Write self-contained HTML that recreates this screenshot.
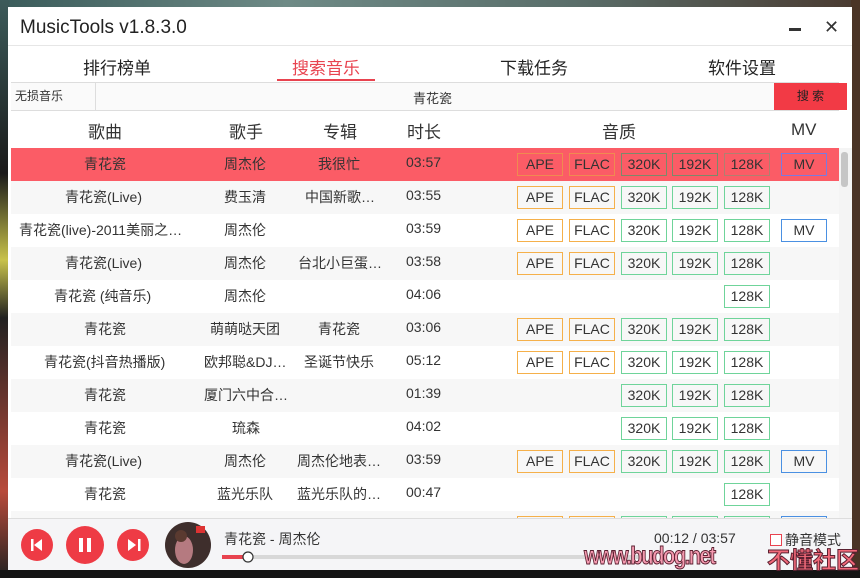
<!DOCTYPE html>
<html><head><meta charset="utf-8"><style>
*{margin:0;padding:0;box-sizing:border-box}
body{width:860px;height:578px;overflow:hidden;background:#1d2a2a;font-family:"Liberation Sans","Noto Sans CJK SC",sans-serif;position:relative;color:#333}
.bg1{position:absolute;left:0;top:0;width:860px;height:8px;background:linear-gradient(90deg,#3a5b5a,#6e8a86,#5a6e6a,#4a3a30)}
.bgL{position:absolute;left:0;top:0;width:9px;height:578px;background:linear-gradient(#3d5b5a,#1a1a1a 30%,#c8c24a 45%,#222 55%,#b84a3a 85%,#222)}
.bgR{position:absolute;right:0;top:0;width:9px;height:578px;background:#4a3426}
.bgB{position:absolute;left:0;top:570px;width:860px;height:8px;background:#141414}
.win{position:absolute;left:8px;top:7px;width:844px;height:563px;background:#fff;overflow:hidden}
.abs{position:absolute}
.title{left:12px;top:10px;font-size:19px;color:#222}
.tab{top:47px;font-size:17px;color:#222}
.hd{top:111px;font-size:17px}
.row{position:absolute;left:3px;width:828px;height:33px;font-size:14px;color:#333}
.row span{position:absolute;top:6px;white-space:nowrap}
.b{position:absolute;top:5px;height:23px;width:46px;border:1px solid;font-size:14px;text-align:center;line-height:21px}
.o{border-color:#f5b04a}.g{border-color:#6fd49a}.m{border-color:#4a90e2}
</style></head><body>
<div class="bg1"></div><div class="bgL"></div><div class="bgR"></div><div class="bgB"></div>
<div class="win">
<div class="abs title">MusicTools v1.8.3.0</div>
<div class="abs" style="left:781px;top:21px;width:12px;height:3px;background:#333"></div>
<div class="abs" style="left:816px;top:10px;font-size:18px;color:#333">✕</div>
<div class="abs" style="left:0;top:38px;width:844px;height:1px;background:#e6e6e6"></div>
<div class="abs tab" style="left:75px">排行榜单</div>
<div class="abs tab" style="left:284px;color:#e8434f">搜索音乐</div>
<div class="abs" style="left:269px;top:72px;width:98px;height:2px;background:#e8434f"></div>
<div class="abs tab" style="left:492px">下载任务</div>
<div class="abs tab" style="left:700px">软件设置</div>
<div class="abs" style="left:3px;top:75px;width:828px;height:29px;border-top:1px solid #ddd;border-bottom:1px solid #ddd;background:#fafafa"></div>
<div class="abs" style="left:3px;top:76px;width:85px;height:27px;border-right:1px solid #ddd;font-size:12px;line-height:27px;padding-left:4px">无损音乐</div>
<div class="abs" style="left:405px;top:81px;font-size:13px">青花瓷</div>
<div class="abs" style="left:766px;top:76px;width:73px;height:27px;background:#f23a45;color:#222;font-size:12px;text-align:center;line-height:27px">搜 索</div>
<div class="abs hd" style="left:80px">歌曲</div>
<div class="abs hd" style="left:221px">歌手</div>
<div class="abs hd" style="left:315px">专辑</div>
<div class="abs hd" style="left:399px">时长</div>
<div class="abs hd" style="left:594px">音质</div>
<div class="abs hd" style="left:783px;top:113px">MV</div>
<div class="abs" style="left:831px;top:141px;width:13px;height:370px;background:#f4f4f4"></div>
<div class="abs" style="left:833px;top:145px;width:7px;height:35px;background:#c6c6c6;border-radius:3px"></div>

<div class="row" style="top:141px;background:#fb5c66"><span style="left:73px">青花瓷</span><span style="left:213px">周杰伦</span><span style="left:307px">我很忙</span><span style="left:395px">03:57</span>
<div class="b" style="left:506px;border-color:#f08a50">APE</div><div class="b" style="left:558px;border-color:#f08a50">FLAC</div><div class="b" style="left:610px;border-color:#7c8a6a">320K</div><div class="b" style="left:661px;border-color:#7c8a6a">192K</div><div class="b" style="left:713px;border-color:#b08070">128K</div><div class="b" style="left:770px;border-color:#7a7ae0">MV</div></div>

<div class="row" style="top:174px;background:#f7f7f7"><span style="left:54px">青花瓷(Live)</span><span style="left:213px">费玉清</span><span style="left:294px">中国新歌…</span><span style="left:395px">03:55</span>
<div class="b o" style="left:506px">APE</div><div class="b o" style="left:558px">FLAC</div><div class="b g" style="left:610px">320K</div><div class="b g" style="left:661px">192K</div><div class="b g" style="left:713px">128K</div></div>

<div class="row" style="top:207px"><span style="left:8px">青花瓷(live)-2011美丽之…</span><span style="left:213px">周杰伦</span><span style="left:395px">03:59</span>
<div class="b o" style="left:506px">APE</div><div class="b o" style="left:558px">FLAC</div><div class="b g" style="left:610px">320K</div><div class="b g" style="left:661px">192K</div><div class="b g" style="left:713px">128K</div><div class="b m" style="left:770px">MV</div></div>

<div class="row" style="top:240px;background:#f7f7f7"><span style="left:54px">青花瓷(Live)</span><span style="left:213px">周杰伦</span><span style="left:287px">台北小巨蛋…</span><span style="left:395px">03:58</span>
<div class="b o" style="left:506px">APE</div><div class="b o" style="left:558px">FLAC</div><div class="b g" style="left:610px">320K</div><div class="b g" style="left:661px">192K</div><div class="b g" style="left:713px">128K</div></div>

<div class="row" style="top:273px"><span style="left:43px">青花瓷 (纯音乐)</span><span style="left:213px">周杰伦</span><span style="left:395px">04:06</span>
<div class="b g" style="left:713px">128K</div></div>

<div class="row" style="top:306px;background:#f7f7f7"><span style="left:73px">青花瓷</span><span style="left:199px">萌萌哒天团</span><span style="left:307px">青花瓷</span><span style="left:395px">03:06</span>
<div class="b o" style="left:506px">APE</div><div class="b o" style="left:558px">FLAC</div><div class="b g" style="left:610px">320K</div><div class="b g" style="left:661px">192K</div><div class="b g" style="left:713px">128K</div></div>

<div class="row" style="top:339px"><span style="left:33px">青花瓷(抖音热播版)</span><span style="left:193px">欧邦聪&amp;DJ…</span><span style="left:293px">圣诞节快乐</span><span style="left:395px">05:12</span>
<div class="b o" style="left:506px">APE</div><div class="b o" style="left:558px">FLAC</div><div class="b g" style="left:610px">320K</div><div class="b g" style="left:661px">192K</div><div class="b g" style="left:713px">128K</div></div>

<div class="row" style="top:372px;background:#f7f7f7"><span style="left:73px">青花瓷</span><span style="left:193px">厦门六中合…</span><span style="left:395px">01:39</span>
<div class="b g" style="left:610px">320K</div><div class="b g" style="left:661px">192K</div><div class="b g" style="left:713px">128K</div></div>

<div class="row" style="top:405px"><span style="left:73px">青花瓷</span><span style="left:221px">琉森</span><span style="left:395px">04:02</span>
<div class="b g" style="left:610px">320K</div><div class="b g" style="left:661px">192K</div><div class="b g" style="left:713px">128K</div></div>

<div class="row" style="top:438px;background:#f7f7f7"><span style="left:54px">青花瓷(Live)</span><span style="left:213px">周杰伦</span><span style="left:286px">周杰伦地表…</span><span style="left:395px">03:59</span>
<div class="b o" style="left:506px">APE</div><div class="b o" style="left:558px">FLAC</div><div class="b g" style="left:610px">320K</div><div class="b g" style="left:661px">192K</div><div class="b g" style="left:713px">128K</div><div class="b m" style="left:770px">MV</div></div>

<div class="row" style="top:471px"><span style="left:73px">青花瓷</span><span style="left:206px">蓝光乐队</span><span style="left:286px">蓝光乐队的…</span><span style="left:395px">00:47</span>
<div class="b g" style="left:713px">128K</div></div>

<div class="row" style="top:504px;background:#f7f7f7;height:8px;overflow:hidden">
<div class="b o" style="left:506px">APE</div><div class="b o" style="left:558px">FLAC</div><div class="b g" style="left:610px">320K</div><div class="b g" style="left:661px">192K</div><div class="b g" style="left:713px">128K</div><div class="b m" style="left:770px">MV</div></div>

<div class="abs" style="left:0;top:511px;width:844px;height:52px;background:#f5f5f7;border-top:1px solid #ddd"></div>
<svg class="abs" style="left:0;top:511px" width="844" height="52">
<circle cx="29" cy="27" r="16" fill="#ee3b45"/><rect x="23" y="21" width="2.5" height="12" fill="#fff"/><path d="M34 21 L26 27 L34 33Z" fill="#fff"/>
<circle cx="77" cy="27" r="19" fill="#ee3b45"/><rect x="71" y="20" width="4" height="14" fill="#fff"/><rect x="79" y="20" width="4" height="14" fill="#fff"/>
<circle cx="125" cy="27" r="16" fill="#ee3b45"/><rect x="130" y="21" width="2.5" height="12" fill="#fff"/><path d="M120 21 L128 27 L120 33Z" fill="#fff"/>
<circle cx="180" cy="27" r="23" fill="#3e2e2c"/><ellipse cx="176" cy="32" rx="9" ry="14" fill="#b57a80"/><circle cx="173" cy="18" r="6" fill="#5a3a30"/><rect x="188" y="8" width="9" height="7" fill="#d33"/>
<rect x="214" y="37" width="420" height="4" fill="#d8d8d8"/><rect x="214" y="37" width="25" height="4" fill="#e8434f"/><circle cx="240" cy="39" r="5" fill="#fff" stroke="#333" stroke-width="1.2"/>
</svg>
<div class="abs" style="left:216px;top:522px;font-size:14px">青花瓷 - 周杰伦</div>
<div class="abs" style="left:646px;top:523px;font-size:14px">00:12 / 03:57</div>
<div class="abs" style="left:762px;top:527px;width:12px;height:12px;border:1px solid #e8434f;background:#fff"></div>
<div class="abs" style="left:777px;top:523px;font-size:14px">静音模式</div>
</div>
<div class="abs" style="left:584px;top:542px;font-size:25px;font-weight:bold;color:#f59ab0;letter-spacing:-2px;transform:scaleX(0.82);transform-origin:left;-webkit-text-stroke:1px #5a2030">www.budog.net</div>
<div class="abs" style="left:767px;top:541px;font-size:23px;font-weight:bold;color:#f36a7a;-webkit-text-stroke:1px #5a2030">不懂社区</div>
</body></html>
